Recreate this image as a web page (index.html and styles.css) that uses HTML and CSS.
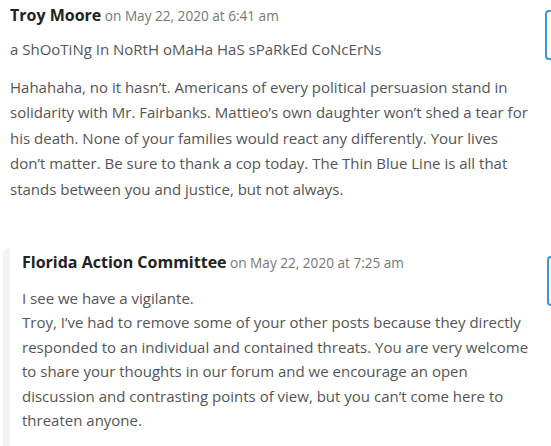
FILE: index.html
```html
<!DOCTYPE html>
<html>
<head>
<meta charset="utf-8">
<link rel="stylesheet" href="styles.css">
</head>
<body>
<div class="comment first">
  <div class="main">
    <div class="meta"><span class="author">Troy Moore</span> <span class="date">on May 22, 2020 at 6:41 am</span></div>
    <p class="title">a ShOoTiNg In NoRtH oMaHa HaS sPaRkEd CoNcErNs</p>
    <p class="text">Hahahaha, no it hasn’t. Americans of every political persuasion stand in solidarity with Mr. Fairbanks. Mattieo’s own daughter won’t shed a tear for his death. None of your families would react any differently. Your lives don’t&nbsp;matter. Be sure to thank a cop today. The Thin Blue Line is all that stands between you and justice, but not always.</p>
  </div>
  <div class="reply"></div>
</div>
<div class="comment child">
  <div class="main">
    <div class="meta"><span class="author">Florida Action Committee</span> <span class="date">on May 22, 2020 at 7:25 am</span></div>
    <p class="text">I see we have a vigilante.<br>Troy, I’ve had to remove some of your other posts because they directly responded to an individual and contained threats. You are very welcome to share your thoughts in our forum and we encourage an open discussion and contrasting points of view, but you can’t come here to threaten anyone.</p>
  </div>
  <div class="reply"></div>
</div>
</body>
</html>
```

FILE: styles.css
```css
html, body {
  margin: 0;
  padding: 0;
  overflow: hidden;
  background: #fff;
}
body {
  font-family: "Open Sans", sans-serif;
  color: #555;
  font-size: 15px;
  width: 551px;
  height: 446px;
}
.comment {
  display: flex;
  align-items: flex-start;
}
.first {
  padding: 3px 0 0 10px;
}
.child {
  margin: 46px 0 0 3px;
  padding: 2px 0 16px 12px;
  border-left: 7px solid #f3f3f3;
  border-top-left-radius: 6px;
}
.main {
  flex: none;
}
.first .main {
  width: 528px;
}
.child .main {
  width: 518px;
}
.meta {
  line-height: 24px;
  color: #777;
  font-size: 13.6px;
}
.author {
  font-weight: 700;
  font-size: 16px;
  color: #222;
}
.title {
  margin: 9px 0 0;
  line-height: 24px;
}
.text {
  margin: 14px 0 0;
  line-height: 25.4px;
}
.child .text {
  margin-top: 11px;
  line-height: 24.4px;
}
.reply {
  flex: none;
  margin-left: 7px;
  width: 50px;
  height: 46px;
  border: 2px solid #3d96d8;
  border-radius: 4px;
}
.first .reply {
  margin-top: 7px;
}
.child .reply {
  margin-top: 6px;
}
```
